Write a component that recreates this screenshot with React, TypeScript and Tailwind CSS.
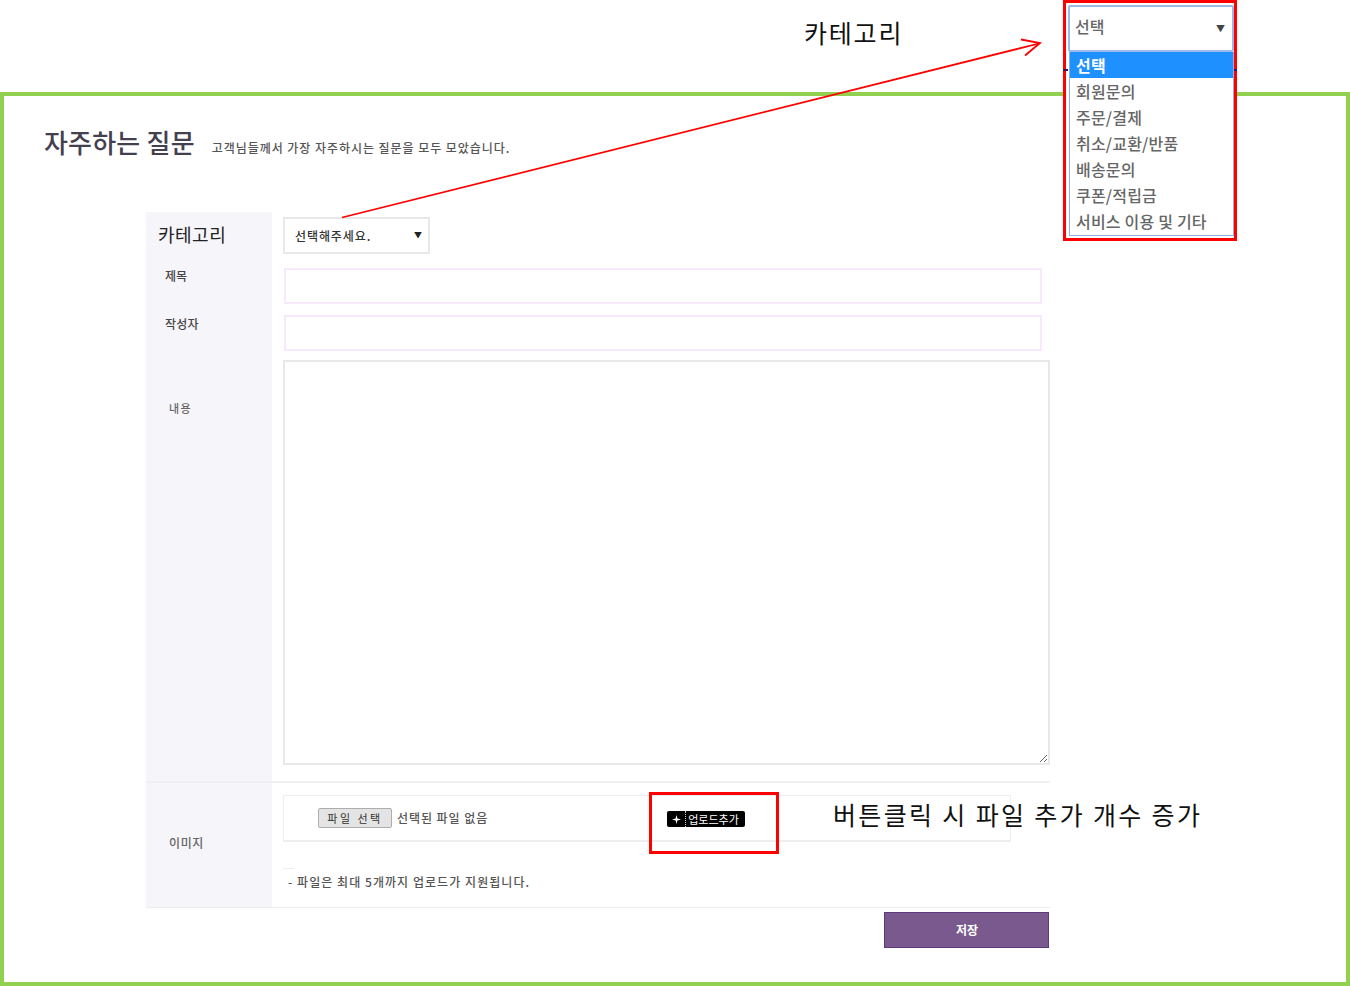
const koFont = { fontFamily: '"Noto Sans CJK KR", "Noto Sans", sans-serif' }

const categories = ['회원문의', '주문/결제', '취소/교환/반품', '배송문의', '쿠폰/적립금', '서비스 이용 및 기타']

function RowLabel({ children, className }: { children: React.ReactNode; className: string }) {
    return <div className={`bg-[#f6f5f9] text-[#444] ${className}`}>{children}</div>
}

function CategoryCallout() {
    return (
        <div className="absolute left-[1063px] top-0 w-[174px] h-[241px] border-[3px] border-[#ff0000] bg-white z-20">
            <div className="mt-[2px] ml-[2px] w-[166px] h-[47px] border-2 border-[#9db9ea] rounded-[2px] flex items-center justify-between pl-[5px] pr-[7px] text-[16px] text-[#666]">
                <span className="-mt-[5px] font-medium">선택</span>
                <span className="text-[9px] text-[#444]">▼</span>
            </div>
            <div className="ml-[3px] w-[165px] h-[184px] border border-t-0 border-[#8fb0e6] text-[16px] text-[#666] font-medium tracking-[0.2px]">
                <div className="h-[26px] pl-[6px] bg-[#1e90ff] text-white font-bold leading-[26px]">선택</div>
                {categories.map((item) => (
                    <div key={item} className="h-[26px] pl-[6px] leading-[26px] whitespace-nowrap">{item}</div>
                ))}
            </div>
            <span className="absolute -left-[3px] top-[66px] w-[5px] h-[2px] bg-[#3a1060]" />
            <span className="absolute -right-[3px] top-[66px] w-[3px] h-[2px] bg-[#3a1060]" />
        </div>
    )
}

function Arrow() {
    return (
        <svg className="absolute left-0 top-0 z-10 pointer-events-none" width="1350" height="986" fill="none" stroke="#ff0000">
            <path d="M342 217.5 L1039 43.5" strokeWidth="1.8" />
            <path d="M1021 39.5 L1040 43 L1025 55.5" strokeWidth="1.8" />
        </svg>
    )
}

export default function App() {
    return (
        <div className="relative w-[1350px] h-[986px] overflow-hidden bg-white" style={koFont}>
            <Arrow />
            <CategoryCallout />
            <div className="absolute left-[804px] top-[13px] z-10 text-[25px] leading-[38px] text-[#111] tracking-[1.8px] whitespace-nowrap">카테고리</div>
            <div className="absolute left-[833px] top-[795px] z-10 text-[25px] leading-[38px] text-[#111] tracking-[2.35px] whitespace-nowrap">버튼클릭 시 파일 추가 개수 증가</div>
            <div className="absolute left-[649px] top-[792px] z-10 w-[130px] h-[62px] border-[3px] border-[#ff0000]" />

            <div className="h-[92px]" />
            <main className="h-[894px] border-4 border-[#92d050] pl-[40px]">
                <div className="flex items-end h-[60px] pt-[24px]">
                    <h1 className="text-[26px] leading-[36px] font-medium tracking-[0.2px] text-[#44404f] translate-y-[4px]">자주하는 질문</h1>
                    <p className="ml-[17px] mb-[1px] text-[12px] leading-[24px] tracking-[0.95px] font-medium text-[#555] translate-y-[5px]">고객님들께서 가장 자주하시는 질문을 모두 모았습니다.</p>
                </div>

                <form className="mt-[56px] ml-[102px] w-[904px]">
                    <div className="grid grid-cols-[126px_1fr] h-[43px]">
                        <RowLabel className="pl-[12px] text-[18px] leading-[44px] tracking-[0.5px] !text-[#222]">카테고리</RowLabel>
                        <div className="pl-[11px] pt-[5px]">
                            <div className="w-[147px] h-[37px] border-2 border-[#e8e8e8] flex items-center justify-between pl-[10px] pr-[5px] text-[12px] font-medium tracking-[0.9px] text-[#333]">
                                <span>선택해주세요.</span>
                                <span className="text-[8px] text-[#222] -mt-[2px]">▼</span>
                            </div>
                        </div>
                    </div>
                    <div className="grid grid-cols-[126px_1fr] h-[46px]">
                        <RowLabel className="pl-[19px] pt-[11px] text-[12px] font-medium leading-[20px] border-b border-[#e4e3ea]">제목</RowLabel>
                        <div className="pl-[12px] pt-[13px]">
                            <input className="block w-[758px] h-[36px] border-2 border-[#f8e8fb] outline-none" />
                        </div>
                    </div>
                    <div className="grid grid-cols-[126px_1fr] h-[47px]">
                        <RowLabel className="pl-[19px] pt-[13px] text-[12px] font-medium tracking-[0.2px] leading-[20px] border-b border-[#e4e3ea]">작성자</RowLabel>
                        <div className="pl-[12px] pt-[14px]">
                            <input className="block w-[758px] h-[36px] border-2 border-[#f8e8fb] outline-none" />
                        </div>
                    </div>
                    <div className="grid grid-cols-[126px_1fr] h-[435px] border-b-2 border-[#f0f0f2]">
                        <RowLabel className="pl-[23px] pt-[50px] text-[11px] leading-[20px] tracking-[1.4px] font-medium !text-[#666]">내용</RowLabel>
                        <div className="pl-[11px] pt-[12px]">
                            <textarea className="block w-[767px] h-[405px] border-2 border-[#e8e8e8] outline-none" />
                        </div>
                    </div>
                    <div className="grid grid-cols-[126px_1fr] h-[125px] border-b border-[#ececec]">
                        <RowLabel className="pl-[23px] pt-[50px] text-[12px] leading-[20px] tracking-[0.6px] font-medium !text-[#666]">이미지</RowLabel>
                        <div className="pl-[11px] pt-[12px]">
                            <div className="w-[728px] h-[47px] border border-[#eeeeee] border-b-2 flex items-center pl-[34px]">
                                <button type="button" className="w-[74px] h-[20px] bg-[#e4e4e4] border border-[#adadad] rounded-[2px] text-[11px] leading-[16px] tracking-[2.5px] text-[#333]">파일 선택</button>
                                <span className="ml-[5px] text-[12px] tracking-[0.95px] font-medium text-[#555] whitespace-nowrap">선택된 파일 없음</span>
                                <div className="ml-[179px] mt-[2px] w-[78px] h-[16px] flex items-stretch text-white text-[11px] leading-[16px]">
                                    <span className="w-[19px] bg-black rounded-l-[2px] border-r border-dotted border-[#ccc] flex items-center justify-center">
                                        <svg width="9" height="9" viewBox="0 0 8 8" fill="#fff"><path d="M4 0l.8 3.2L8 4l-3.2.8L4 8l-.8-3.2L0 4l3.2-.8z" /></svg>
                                    </span>
                                    <span className="flex-1 bg-black rounded-r-[2px] pl-[2px] whitespace-nowrap">업로드추가</span>
                                </div>
                            </div>
                            <div className="mt-[26px] w-[11px] h-px bg-[#eeeeee]" />
                            <p className="mt-[4px] pl-[5px] text-[12px] leading-[18px] font-medium text-[#555] tracking-[1.05px] whitespace-nowrap">- 파일은 최대 5개까지 업로드가 지원됩니다.</p>
                        </div>
                    </div>
                    <div className="flex justify-end mt-[4px] pr-[1px]">
                        <button type="button" className="w-[165px] h-[36px] bg-[#7a5a8e] border border-[#5c3a7c] text-white text-[12px] font-bold"><span className="block -mt-[1px] ml-[1px]">저장</span></button>
                    </div>
                </form>
            </main>
        </div>
    )
}
